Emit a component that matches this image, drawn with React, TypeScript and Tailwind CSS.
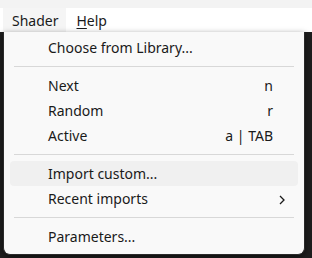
import React from 'react';

type Item =
  | { kind: 'item'; label: string; shortcut?: string; sub?: boolean; active?: boolean }
  | { kind: 'sep' };

const items: Item[] = [
  { kind: 'item', label: 'Choose from Library...' },
  { kind: 'sep' },
  { kind: 'item', label: 'Next', shortcut: 'n' },
  { kind: 'item', label: 'Random', shortcut: 'r' },
  { kind: 'item', label: 'Active', shortcut: 'a | TAB' },
  { kind: 'sep' },
  { kind: 'item', label: 'Import custom...', active: true },
  { kind: 'item', label: 'Recent imports', sub: true },
  { kind: 'sep' },
  { kind: 'item', label: 'Parameters...' }
];

function Chevron() {
  return (
    <svg width="8" height="10" viewBox="0 0 8 10" className="text-[#1a1a1a]">
      <path d="M2 1l4 4-4 4" fill="none" stroke="currentColor" strokeWidth="1.3" />
    </svg>
  );
}

export default function App() {
  return (
    <div
      className="w-[312px] h-[258px] overflow-hidden bg-[#1e1e1e] flex flex-col text-[14px] text-[#1a1a1a]"
      style={{ fontFamily: '"Noto Sans", "Segoe UI", sans-serif' }}
    >
      <div className="h-[8px] bg-[#f3f3f3]" />
      <div className="h-[24px] bg-white flex items-center pl-[3px]">
        <div className="h-full flex items-center pl-[9px] pr-[8px] bg-[#f5f5f5]">Shader</div>
        <div className="h-full flex items-center pl-[10px] pr-[9px]">
          <span className="underline underline-offset-2 decoration-1">H</span>elp
        </div>
      </div>
      <div className="relative flex-1">
        <div className="absolute left-[3px] top-0 w-[302px] bg-[#f9f9f9] border-x border-b border-[#2a2a2a] rounded-b-[7px] shadow-[0_2px_6px_rgba(0,0,0,0.5)] px-[6px] pt-[3px] pb-[5px]">
          {items.map((it, i) =>
            it.kind === 'sep' ? (
              <div key={i} className="mx-[4px] my-[6px] h-px bg-[#d8d8d8]" />
            ) : (
              <div
                key={i}
                className={`h-[25px] flex items-center pl-[38px] pr-[25px] rounded-[4px] ${it.active ? 'bg-[#f0f0f0]' : ''}`}
              >
                <span className="flex-1">{it.label}</span>
                {it.shortcut && <span>{it.shortcut}</span>}
                {it.sub && (
                  <span className="-mr-[13px] pt-[2px]">
                    <Chevron />
                  </span>
                )}
              </div>
            )
          )}
        </div>
      </div>
    </div>
  );
}
